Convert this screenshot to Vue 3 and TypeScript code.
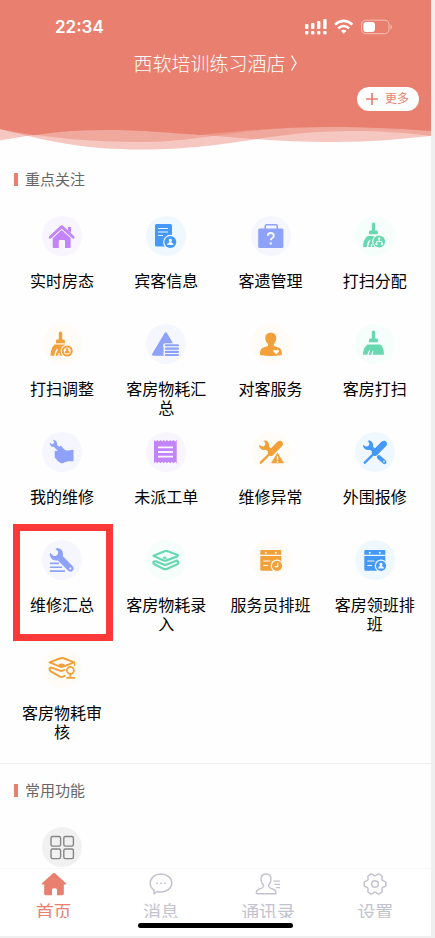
<script setup lang="ts">
import { ref } from 'vue'

interface Entry {
  label: string
  icon: string
  tone: string
  marked?: boolean
}

interface Tab {
  label: string
  icon: string
}

const entries: Entry[] = [
  { label: '实时房态', icon: 'house', tone: 'purple' },
  { label: '宾客信息', icon: 'guest', tone: 'blue' },
  { label: '客遗管理', icon: 'case', tone: 'indigo' },
  { label: '打扫分配', icon: 'broom-assign', tone: 'green' },
  { label: '打扫调整', icon: 'broom-adjust', tone: 'orange' },
  { label: '客房物耗汇总', icon: 'usage', tone: 'indigo' },
  { label: '对客服务', icon: 'service', tone: 'orange' },
  { label: '客房打扫', icon: 'broom', tone: 'green' },
  { label: '我的维修', icon: 'hand', tone: 'indigo' },
  { label: '未派工单', icon: 'receipt', tone: 'purple' },
  { label: '维修异常', icon: 'tools-alert', tone: 'orange' },
  { label: '外围报修', icon: 'tools', tone: 'blue' },
  { label: '维修汇总', icon: 'wrench-list', tone: 'indigo', marked: true },
  { label: '客房物耗录入', icon: 'layers', tone: 'green' },
  { label: '服务员排班', icon: 'calendar-clock', tone: 'orange' },
  { label: '客房领班排班', icon: 'calendar-user', tone: 'blue' },
  { label: '客房物耗审核', icon: 'layers-audit', tone: 'orange' },
]

const tabs: Tab[] = [
  { label: '首页', icon: 'tab-home' },
  { label: '消息', icon: 'tab-message' },
  { label: '通讯录', icon: 'tab-contacts' },
  { label: '设置', icon: 'tab-settings' },
]

const activeTab = ref(0)
</script>

<template>
  <div class="screen">
    <svg class="sprite" aria-hidden="true">
      <symbol id="house" viewBox="0 0 40 40">
        <path d="M8.2 21.2 19.7 10.6 31.2 21.2" fill="none" stroke="currentColor" stroke-width="2.8" stroke-linecap="round" stroke-linejoin="round" />
        <path d="M26 11h3v6l-3-2.6z" fill="currentColor" />
        <path d="M10.7 22.3 19.7 14l9 8.300V31q0 1-1 1H23v-7q0-1-1-1h-4.200q-1 0-1 1v7h-5.100q-1 0-1-1z" fill="currentColor" />
      </symbol>
      <symbol id="guest" viewBox="0 0 40 40">
        <rect x="9" y="8" width="17" height="22.5" rx="1.5" fill="currentColor" />
        <path d="M12 12.500h10M12 16h10M12 19.500h5" stroke="var(--tint)" stroke-width="1.1" />
        <circle cx="24.3" cy="26" r="7.2" fill="var(--tint)" />
        <circle cx="24.3" cy="26" r="6" fill="currentColor" />
        <path d="M24.300 22.700a1.700 1.700 0 0 1 1 3l.3 1q2 .4 2 2.300h-6.600q0-1.900 2-2.300l.3-1a1.700 1.700 0 0 1 1-3z" fill="var(--tint)" />
      </symbol>
      <symbol id="case" viewBox="0 0 40 40">
        <path d="M14.200 14v-3.500q0-1.700 1.700-1.700h8.700q1.700 0 1.700 1.700V14" fill="none" stroke="currentColor" stroke-width="1.6" />
        <rect x="7.2" y="12.5" width="25.2" height="19.5" rx="1.5" fill="currentColor" />
        <path d="M16.800 19.800q0-2.800 3-2.800t3 2.700q0 1.400-1.500 2.300-1.500.9-1.500 2.300" fill="none" stroke="var(--tint)" stroke-width="1.9" />
        <circle cx="19.8" cy="27.4" r="1.2" fill="var(--tint)" />
      </symbol>
      <symbol id="broom-head" viewBox="0 0 40 40">
        <path d="M16.800 14.500V8q0-1.500 1.700-1.500T20.200 8v6.500h1.300q1.400 0 1.400 1.400v2.300h-9v-2.300q0-1.400 1.400-1.400z" fill="currentColor" />
      </symbol>
      <symbol id="broom" viewBox="0 0 40 40">
        <use href="#broom-head" />
        <path d="M12.500 20.500h12.800q3.700 3 3.700 10.200H8q0-6.800 4.500-10.200z" fill="currentColor" />
        <path d="M13 31q.2-2.600 1.800-4.500M17 31q0-2 1-3.800" fill="none" stroke="var(--tint)" stroke-width="1.2" />
      </symbol>
      <symbol id="broom-assign" viewBox="0 0 40 40">
        <use href="#broom-head" />
        <path d="M12.500 20h10.500l1 2-4 9H8q0-7.200 4.500-11z" fill="currentColor" />
        <path d="M12.500 31q.3-4.500 2.500-7M16.500 31v-3" fill="none" stroke="var(--tint)" stroke-width="1.3" />
        <circle cx="24.2" cy="25.5" r="7" fill="var(--tint)" />
        <circle cx="24.2" cy="25.5" r="5.9" fill="currentColor" />
        <path d="M24.200 23v2.500M21.500 27.500v-2h5.400v2" fill="none" stroke="var(--tint)" stroke-width=".9" />
        <path d="M23.100 21.500h2.200v2h-2.200zM20.500 27h2v1.900h-2zM25.900 27h2v1.900h-2z" fill="var(--tint)" />
      </symbol>
      <symbol id="broom-adjust" viewBox="0 0 40 40">
        <use href="#broom-head" y="1" />
        <path d="M12.500 20.500h10.500l1 2-4 9.200H8.500q0-7.200 4-11.200z" fill="currentColor" />
        <path d="M13 32q.3-4.500 2.500-7M17 32v-3" fill="none" stroke="var(--tint)" stroke-width="1.3" />
        <circle cx="25.2" cy="27" r="6.6" fill="var(--tint)" />
        <circle cx="25.2" cy="27" r="4.5" fill="none" stroke="currentColor" stroke-width="2" />
        <path d="M25.200 24.300a1.200 1.200 0 0 1 .8 2.200q1.900.6 1.900 2.700h-5.400q0-2.100 1.900-2.700a1.200 1.200 0 0 1 .8-2.200z" fill="currentColor" />
      </symbol>
      <symbol id="usage" viewBox="0 0 40 40">
        <path d="M18.300 9.500q1.500-2.300 3 0L27 19.200h-7.500q-2.500 0-2.500 2 0 1 .8 1.700-1 1.200 0 2.400-1 1.200 0 2.400-1.300 1.700.2 4H7.500q-2.300 0-1.100-2.200z" fill="currentColor" />
        <path d="M19.800 21.200H32M19.800 24.600H32M19.800 27.900H32M19.800 31H32" stroke="currentColor" stroke-width="2.1" stroke-linecap="round" />
      </symbol>
      <symbol id="service" viewBox="0 0 40 40">
        <path d="M19.800 8.700c3.700 0 5.800 2.200 5.500 5.800-.2 2.800-1.300 4.300-2.500 5.500v2l5.200 1.800c2.200.8 3 3.200 2.800 7.200q-11 1.800-21.800 0c-.2-4 .6-6.400 2.800-7.200L17 22v-2c-1.300-1.200-2.500-2.700-2.700-5.500-.3-3.600 1.800-5.800 5.500-5.800z" fill="currentColor" />
        <path d="m25.200 30.300-2.500-2.300c-1.400-1.600 1-3.200 2.500-1.500 1.500-1.700 3.900-.1 2.500 1.500z" fill="var(--tint)" />
      </symbol>
      <symbol id="hand" viewBox="0 0 40 40">
        <path d="M11 7.800q3.400.3 4 3.400.2 1-.1 1.900l5.600 4-3 3.500-5.500-5.500q-3 .2-4-2.300-.4-1-.1-2l2.400 1.700 2-1.800z" fill="currentColor" />
        <path d="M17.500 13.800q1.500-.6 2.400 1l2.700 3q2 1.200 3.500.6l5.400-.6v11.400h-5.200l-3.500 1H17l-4.300-4.600v-6.800l3.200.2q1.800.3 2.500-1.400z" fill="currentColor" />
        <path d="m15.500 19 3 1.800M18 30q2 2 4 0z" fill="currentColor" stroke="currentColor" />
      </symbol>
      <symbol id="receipt" viewBox="0 0 40 40">
        <path d="M8 8l1.600 1.500L11.300 8l1.600 1.500L14.500 8l1.600 1.500L17.700 8l1.600 1.500L21 8l1.600 1.500L24.200 8l1.600 1.500L27.500 8l1.600 1.500L30.700 8v23.300l-1.600-1.500-1.600 1.500-1.700-1.500-1.600 1.500-1.600-1.500-1.600 1.500-1.700-1.500-1.600 1.500-1.600-1.500-1.600 1.500-1.600-1.500-1.600 1.500-1.700-1.500L8 31.300z" fill="currentColor" />
        <path d="M12 15.300h15M12 20h15M12 24.700h15" stroke="var(--tint)" stroke-width="1.8" />
      </symbol>
      <symbol id="tools-base" viewBox="0 0 40 40">
        <path d="M13.500 8.200q4.300.8 4.700 4.800 0 1-.2 1.700l3 2.800-3 3-3-2.700q-4.300 1.200-6.400-2.300-.8-1.500-.5-2.800l2.200 1.500q2.300.8 3.600-1 1.200-1.900-.7-3.800z" fill="currentColor" />
        <path d="M9.800 30.700 20 20.500" stroke="currentColor" stroke-width="2.4" stroke-linecap="round" />
        <path d="m17.500 18.800 8.700-8.700q2.800-2.500 5-.4 1.800 2.200-.5 4.700L22 23.200q-1.800 1.500-3.400.5l-1.500-1.300q-1-2 .4-3.600z" fill="currentColor" />
      </symbol>
      <symbol id="tools" viewBox="0 0 40 40">
        <use href="#tools-base" />
        <path d="m24 25.200 5.400 4.800" stroke="currentColor" stroke-width="4.2" stroke-linecap="round" />
        <circle cx="29" cy="29.600" r=".9" fill="var(--tint)" />
      </symbol>
      <symbol id="tools-alert" viewBox="0 0 40 40">
        <use href="#tools-base" />
        <path d="M25.600 21.300q.9-1.400 1.800 0l5.500 9q.6 1.400-.8 1.400H20.900q-1.400 0-.8-1.400z" fill="currentColor" stroke="var(--tint)" stroke-width=".8" />
        <path d="M26.500 24v3.800M26.500 29v1.400" stroke="var(--tint)" stroke-width="1.4" />
      </symbol>
      <symbol id="wrench-list" viewBox="0 0 40 40">
        <path d="M15.500 8q5.500 1 5.500 6.200 0 1-.3 1.800L31 26.500q1.500 2.300-.3 4.200-2 1.800-4.200.2L15.600 20.200q-4.500 1-7-3-1.200-2.400-.6-4.400l3.300 3q2.500.7 4-1 1.400-1.800.6-3.600l-2.600-2.500z" fill="currentColor" />
        <circle cx="28.3" cy="28.5" r="1.1" fill="var(--tint)" />
        <path d="M8.500 23.400h7.800M8.500 27.300h11M8.500 31.100h14" stroke="currentColor" stroke-width="1.6" stroke-linecap="round" />
      </symbol>
      <symbol id="layers" viewBox="0 0 40 40">
        <g fill="none" stroke="currentColor" stroke-width="2.2" stroke-linejoin="round" stroke-linecap="round">
          <path d="M7.500 15.800 18.500 11.300q1.600-.6 3.200 0l9.500 3.400q1.600.8 0 1.700l-10.500 4q-1.600.6-3.200 0z" />
          <path d="M31 20.600 20.800 24.600q-1.600.6-3.200 0L9.800 21.300q-2.300-.3-2.500 1.300 0 1.200 1.200 1.700l9.300 4.600q1.500.6 3 0l10.500-4.600q2-1.700-.3-3.700" />
        </g>
        <path d="M16.500 18.800q.2-2.300 2.200-2.300t2.300 2.300z" fill="currentColor" />
      </symbol>
      <symbol id="layers-audit" viewBox="0 0 40 40">
        <g fill="none" stroke="currentColor" stroke-width="2" stroke-linejoin="round" stroke-linecap="round">
          <path d="M7.500 14.400 18.500 10.200q1.600-.5 3.200 0l10.500 4.200-11 4.200q-1.600.6-3.200 0z" />
          <path d="M22.300 22 20.700 22.600q-1.500.6-3 0L9.800 19.600q-2.300-.2-2.300 1.500 0 1.500 1.200 2.300l9.300 5.200q1.500.6 3 0l1.700-.8" />
          <circle cx="28.4" cy="22.3" r="3.500" stroke-width="1.8" />
          <path d="M28.400 26v3.500M25 29.800h7.500" stroke-width="1.8" />
        </g>
        <path d="M16 17.500q.5-2 3.500-2t4 2l-3 1.200z" fill="currentColor" />
        <path d="M32.500 14.500v3.500" stroke="currentColor" stroke-width="1.3" />
      </symbol>
      <symbol id="calendar" viewBox="0 0 40 40">
        <path d="M10.500 10h18.800q1 0 1 1v3.700h-21V11q0-1 1.200-1zM9.300 15.900h21v13.700q0 1.200-1.200 1.200H10.500q-1.200 0-1.200-1.200z" fill="currentColor" />
        <circle cx="14.800" cy="12.700" r="1" fill="var(--tint)" />
        <circle cx="24.800" cy="12.700" r="1" fill="var(--tint)" />
        <path d="M12.300 21h7M12.300 25.500h4.800" stroke="var(--tint)" stroke-width="1.2" />
        <circle cx="26" cy="25.8" r="6.3" fill="var(--tint)" />
        <circle cx="26" cy="25.8" r="5.1" fill="currentColor" />
      </symbol>
      <symbol id="calendar-clock" viewBox="0 0 40 40">
        <use href="#calendar" />
        <path d="M26.700 22.800v3.900h-3" fill="none" stroke="var(--tint)" stroke-width="1.2" />
      </symbol>
      <symbol id="calendar-user" viewBox="0 0 40 40">
        <use href="#calendar" />
        <path d="M26 22.700a1.500 1.500 0 0 1 .9 2.700l.2.800q1.900.4 1.900 2.200h-6q0-1.800 1.900-2.200l.2-.8a1.500 1.500 0 0 1 .9-2.700z" fill="var(--tint)" />
      </symbol>
      <symbol id="apps" viewBox="0 0 40 40">
        <g fill="none" stroke="currentColor" stroke-width="1.4">
          <rect x="9" y="9.5" width="9.6" height="9.6" rx="1.5" />
          <rect x="21.8" y="9.5" width="9.6" height="9.6" rx="1.5" />
          <rect x="9" y="22" width="9.6" height="9.6" rx="1.5" />
          <rect x="21.8" y="22" width="9.6" height="9.6" rx="1.5" />
        </g>
      </symbol>
      <symbol id="tab-home" viewBox="0 0 28 24">
        <path d="M13 1.300q1-.9 2 0l11 9.900q.8 1.200-.6 1.300h-1.600v9.300q0 1.500-1.500 1.500H17v-5q0-2-1.500-2h-2q-1.500 0-1.500 2v5H5.700q-1.500 0-1.500-1.500v-9.300H2.600q-1.400-.1-.6-1.300z" fill="currentColor" />
      </symbol>
      <symbol id="tab-message" viewBox="0 0 28 24">
        <path d="M14 2c6 0 10.800 3.800 10.800 9s-4.800 9-10.800 9q-2 0-3.800-.5L7 21.800l.2-3.500C4.500 16.500 3.200 14 3.200 11 3.200 5.800 8 2 14 2z" fill="none" stroke="currentColor" stroke-width="1.5" stroke-linejoin="round" />
        <path d="M9.300 11.300h1.600M13.200 11.300h1.600M17.100 11.300h1.600" stroke="currentColor" stroke-width="1.6" />
      </symbol>
      <symbol id="tab-contacts" viewBox="0 0 28 24">
        <path d="M12 2c3 0 5 2.200 5 5.300 0 2.900-1.100 4.600-2.600 6 0 1.700.3 2.200 2 2.800l3.600 1.400c1.600.6 2 1.400 2 3.500q0 .7-.8.700H3.100q-.8 0-.8-.7c0-2.100.4-2.900 2-3.500l3.500-1.400c1.700-.6 1.900-1.100 1.900-2.800C8.100 11.900 7 10.200 7 7.300 7 4.200 9 2 12 2z" fill="none" stroke="currentColor" stroke-width="1.4" />
        <path d="M19.500 9.200H26M20.500 12.400H26M22 15.600h4" stroke="currentColor" stroke-width="1.2" />
      </symbol>
      <symbol id="tab-settings" viewBox="0 0 28 24">
        <path d="M9.700 2.200q1.200-.6 2 .4 2.300 2.500 4.600 0 .8-1 2-.4l2.300 1.400q.9.700.5 1.900-1 3.100 2.300 3.700 1.400.2 1.400 1.400v2.800q0 1.200-1.400 1.400-3.300.6-2.300 3.700.4 1.200-.5 1.900l-2.300 1.400q-1.200.6-2-.4-2.300-2.500-4.600 0-.8 1-2 .4l-2.300-1.400q-.9-.7-.5-1.900 1-3.100-2.300-3.700-1.400-.2-1.400-1.400v-2.800q0-1.200 1.400-1.400 3.300-.6 2.300-3.700-.4-1.200.5-1.900z" fill="none" stroke="currentColor" stroke-width="1.5" />
        <circle cx="14" cy="12" r="3.3" fill="none" stroke="currentColor" stroke-width="1.5" />
      </symbol>
    </svg>

    <header class="header">
      <div class="status">
        <span class="time">22:34</span>
        <svg class="status-icons" viewBox="0 0 88 18" aria-hidden="true">
          <g fill="#fff">
            <rect x="0" y="6" width="3.4" height="5" rx="1" />
            <rect x="6" y="5" width="3.4" height="6" rx="1" />
            <rect x="12" y="3" width="3.4" height="8" rx="1" />
            <rect x="18.200" y="1" width="3.4" height="10" rx="1" />
            <rect x="0" y="13" width="3.4" height="3.6" rx="1" />
            <rect x="6" y="13" width="3.4" height="3.6" rx="1" />
            <rect x="12" y="13" width="3.4" height="3.6" rx="1" />
            <rect x="18.200" y="13" width="3.4" height="3.6" rx="1" />
            <path d="m38.700 15.800-2.800-2.900q2.800-2.200 5.600 0z" />
            <rect x="58.300" y="4" width="11.700" height="10" rx="3" />
            <path d="M85.500 6.800q1.700.4 1.700 2.200t-1.700 2.200z" opacity=".5" />
          </g>
          <g fill="none" stroke="#fff">
            <path d="M30 6.600q8.700-7.400 17.400 0M33.200 10.300q5.500-4.600 11 0" stroke-width="2.5" />
            <rect x="56.500" y="2.200" width="27.500" height="13.500" rx="4.200" opacity=".5" />
          </g>
        </svg>
      </div>
      <a class="hotel" href="#">西软培训练习酒店<svg class="chevron" viewBox="0 0 8 18" aria-hidden="true"><path d="m1.500 1.500 4.500 7.500-4.500 7.500" fill="none" stroke="#fff" stroke-width="1.3" /></svg></a>
      <div class="actions">
        <button class="more" type="button">
          <svg class="plus" viewBox="0 0 14 14" aria-hidden="true"><path d="M1 7h12M7 1v12" stroke="currentColor" stroke-width="1.7" /></svg>
          <span class="more-label">更多</span>
        </button>
      </div>
    </header>
    <svg class="waves" viewBox="0 0 431 30" preserveAspectRatio="none" aria-hidden="true">
      <g fill="#e97f6f">
        <path opacity=".43" d="M0 0V20.500C40 13 70 10 105 10C190 10 240 22 335 22C370 22 400 19 431 16V0z" />
        <path opacity=".43" d="M0 0V9C45 21 85 29.500 140 29.500C230 29.500 270 11 350 11C380 11 410 13 431 16V0z" />
        <path opacity=".43" d="M0 0V9C45 18 95 22 140 22C200 22 240 7 330 7C370 7 405 9 431 11V0z" />
        <path d="M0 0V9Q16 12.500 34 15.200Q65 10 105 10C145 10 172 13 200 15C235 11 280 7 330 7C370 7 405 9 431 11V0z" />
      </g>
    </svg>

    <main class="content">
      <section class="section">
        <h2 class="heading">重点关注</h2>
        <div class="grid">
          <button
            v-for="entry in entries"
            :key="entry.label"
            type="button"
            class="entry"
            :class="[entry.tone, { marked: entry.marked }]"
          >
            <svg class="badge" aria-hidden="true"><use :href="'#' + entry.icon" /></svg>
            <span class="label">{{ entry.label }}</span>
          </button>
        </div>
      </section>
      <section class="section common">
        <h2 class="heading">常用功能</h2>
        <div class="grid">
          <button type="button" class="entry gray" aria-label="全部">
            <svg class="badge" aria-hidden="true"><use href="#apps" /></svg>
          </button>
        </div>
      </section>
    </main>

    <nav class="tabs">
      <button
        v-for="(tab, index) in tabs"
        :key="tab.label"
        type="button"
        class="tab"
        :class="{ active: index === activeTab }"
        @click="activeTab = index"
      >
        <svg class="tab-icon" aria-hidden="true"><use :href="'#' + tab.icon" /></svg>
        <span class="tab-label">{{ tab.label }}</span>
      </button>
      <span class="home-indicator"></span>
    </nav>
  </div>
</template>

<style>
body {
  background: #efefef;
}
</style>

<style scoped>
.screen {
  box-sizing: border-box;
  display: flex;
  flex-direction: column;
  height: 100vh;
  border: solid #efefef;
  border-width: 0 4px 2px 0;
  background: #fefefe;
  font-family: "Noto Sans CJK SC", sans-serif;
  overflow: hidden;
}

.sprite {
  position: absolute;
  width: 0;
  height: 0;
}

button {
  margin: 0;
  padding: 0;
  border: 0;
  background: none;
  font: inherit;
  cursor: pointer;
}

.header {
  flex: none;
  display: flex;
  flex-direction: column;
  padding-bottom: 9px;
  background: #e97f6f;
  color: #fff;
}

.status {
  display: flex;
  align-items: center;
  justify-content: space-between;
  padding: 16px 38px 0 55px;
}

.time {
  font: 600 17px/22px Inter, sans-serif;
}

.status-icons {
  width: 88px;
  height: 18px;
}

.hotel {
  display: flex;
  align-items: center;
  justify-content: center;
  gap: 4px;
  margin-top: 11px;
  color: #fff;
  font-size: 19px;
  font-weight: 300;
  line-height: 28px;
  text-decoration: none;
}

.chevron {
  width: 8px;
  height: 18px;
}

.actions {
  display: flex;
  justify-content: flex-end;
  padding: 10px 12px 0 0;
}

.more {
  display: flex;
  align-items: center;
  gap: 6px;
  height: 24px;
  padding: 0 10px 0 8px;
  border-radius: 12px;
  background: #fff;
  color: #e97f6f;
  font-size: 12px;
}

.more-label {
  padding-bottom: 2px;
  line-height: 16px;
}

.plus {
  width: 14px;
  height: 14px;
}

.waves {
  flex: none;
  display: block;
  width: 100%;
  height: 30px;
}

.content {
  flex: 1;
  min-height: 0;
  overflow: hidden;
}

.section {
  padding-top: 19px;
}

.common {
  border-top: 1px solid #f0f0f0;
  padding-top: 16px;
}

.heading {
  display: flex;
  align-items: center;
  gap: 7px;
  margin: 0 0 27px 14px;
  color: #666;
  font-size: 15px;
  font-weight: 400;
  line-height: 20px;
}

.heading::before {
  width: 4px;
  height: 13px;
  background: #e97f6f;
  content: "";
}

.grid {
  display: grid;
  grid-template-columns: repeat(4, 1fr);
  grid-auto-rows: minmax(108px, auto);
  padding: 0 4px 7px 10px;
}

.entry {
  position: relative;
  display: flex;
  flex-direction: column;
  align-items: center;
  gap: 15px;
}

.badge {
  width: 40px;
  height: 40px;
  border-radius: 50%;
  background: var(--tint);
}

.label {
  width: 84px;
  color: #000;
  font-size: 16px;
  line-height: 19px;
}

.marked::after {
  position: absolute;
  inset: -16px 1px 7px 3px;
  border: 7px solid #fd3838;
  content: "";
}

.purple {
  --tint: #f9f5fe;
  color: #c184fb;
}

.blue {
  --tint: #f0f8ff;
  color: #4499f8;
}

.indigo {
  --tint: #f6f7fe;
  color: #8ea2f9;
}

.green {
  --tint: #f6fefc;
  color: #68d8b1;
}

.orange {
  --tint: #fffcf7;
  color: #f2a03a;
}

.gray {
  --tint: #f1f1f1;
  color: #858585;
}

.tabs {
  position: relative;
  flex: none;
  display: grid;
  grid-template-columns: repeat(4, 1fr);
  padding: 0 2px 18px 0;
  border-top: 1px solid #f7f7f7;
  background: #fff;
}

.tab {
  display: flex;
  flex-direction: column;
  align-items: center;
  gap: 2px;
  padding-top: 3px;
  color: #c2c3cf;
}

.active {
  color: #e97f6f;
}

.tab-icon {
  width: 28px;
  height: 24px;
}

.tab-label {
  height: 20px;
  overflow: hidden;
  font-size: 18px;
  line-height: 26px;
}

.home-indicator {
  position: absolute;
  bottom: 8px;
  left: 32%;
  width: 36%;
  height: 5px;
  border-radius: 3px;
  background: #000;
}
</style>
